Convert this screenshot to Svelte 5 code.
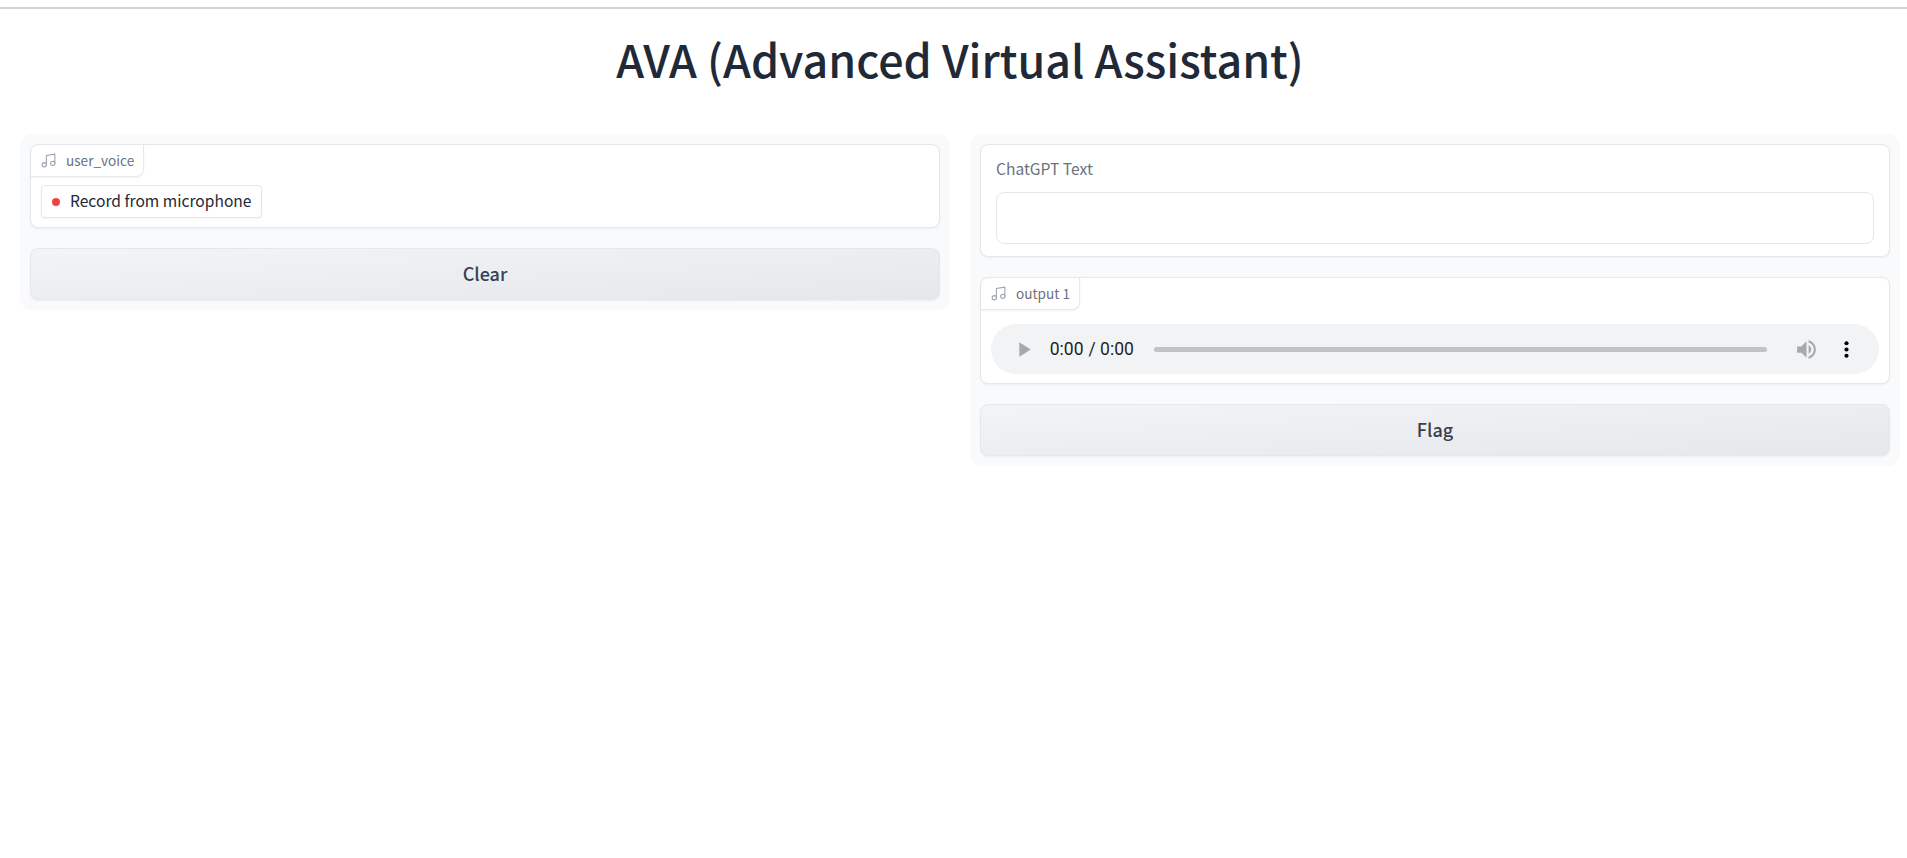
<script lang="ts">
  // AVA demo page: two-column Gradio style interface
  const noteIcon = 'M9 18V5l12-2v13';
</script>

{#snippet note()}
  <svg class="note" viewBox="0 0 24 24" fill="none" stroke="currentColor" stroke-width="1.5" stroke-linecap="round" stroke-linejoin="round">
    <path d={noteIcon} />
    <circle cx="6" cy="18" r="3" />
    <circle cx="18" cy="16" r="3" />
  </svg>
{/snippet}

<div class="page">
  <h1>AVA (Advanced Virtual Assistant)</h1>

  <main class="columns">
    <section class="panel">
      <div class="block audio-in">
        <div class="tab">{@render note()}<span>user_voice</span></div>
        <div class="record-row">
          <button class="record"><i class="dot"></i><span>Record from microphone</span></button>
        </div>
      </div>
      <button class="action">Clear</button>
    </section>

    <section class="panel">
      <div class="block text-out">
        <label for="reply">ChatGPT Text</label>
        <textarea id="reply" rows="1"></textarea>
      </div>
      <div class="block audio-out">
        <div class="tab">{@render note()}<span>output 1</span></div>
        <div class="player">
          <audio controls></audio>
        </div>
      </div>
      <button class="action">Flag</button>
    </section>
  </main>
</div>

<style>
  :global(body) {
    background: #fff;
  }

  .page {
    border-top: 2px solid #d4d4d6;
    margin-top: 7px;
    padding: 0 7px 0 20px;
    font-family: "Noto Sans CJK SC", "Source Sans Pro", sans-serif;
  }

  h1 {
    margin: 0;
    height: 125px;
    padding-top: 26px;
    box-sizing: border-box;
    font-size: 44.8px;
    line-height: 48px;
    font-weight: 500;
    color: #1f2937;
    text-align: center;
  }

  .columns {
    display: flex;
    align-items: flex-start;
    gap: 20px;
  }

  .panel {
    flex: 1 1 0;
    display: flex;
    flex-direction: column;
    gap: 20px;
    padding: 10px;
    background: #f9fafb;
    border-radius: 12px;
  }

  .block {
    position: relative;
    background: #fff;
    border: 1px solid #e5e7eb;
    border-radius: 8px;
    box-shadow: 0 1px 2px rgba(0, 0, 0, 0.05);
  }

  .tab {
    display: inline-flex;
    align-items: center;
    gap: 9px;
    height: 31px;
    padding: 0 9px 0 9px;
    border-right: 1px solid #e5e7eb;
    border-bottom: 1px solid #e5e7eb;
    border-radius: 8px 0 8px 0;
    box-shadow: 0 1px 2px rgba(0, 0, 0, 0.05);
    font-size: 13.6px;
    line-height: 20px;
    color: #6b7280;
  }

  .tab span {
    margin-top: -1px;
  }

  .note {
    width: 17px;
    height: 17px;
    color: #9ca3af;
  }

  .audio-in {
    height: 84px;
    box-sizing: border-box;
  }

  .record-row {
    padding: 8px 10px;
  }

  .record {
    display: inline-flex;
    align-items: center;
    height: 33px;
    padding: 0 9px 0 10px;
    background: #fff;
    border: 1px solid #e5e7eb;
    border-radius: 4px;
    box-shadow: 0 1px 2px rgba(0, 0, 0, 0.05);
    font-family: inherit;
    font-size: 15.6px;
    color: #1f2937;
  }

  .record span {
    margin-top: -4px;
  }

  .dot {
    width: 8px;
    height: 8px;
    margin-right: 10px;
    border-radius: 50%;
    background: #ef4444;
  }

  .action {
    height: 52px;
    padding-bottom: 3px;
    background: linear-gradient(to bottom right, #f3f4f6, #e5e7eb);
    border: 1px solid #e5e7eb;
    border-radius: 8px;
    box-shadow: 0 1px 2px rgba(0, 0, 0, 0.05);
    font-family: inherit;
    font-size: 18px;
    font-weight: 500;
    color: #374151;
  }

  .text-out {
    height: 113px;
    box-sizing: border-box;
    padding: 11px 15px;
  }

  label {
    display: block;
    margin-bottom: 12px;
    font-size: 15.6px;
    line-height: 24px;
    color: #6b7280;
  }

  textarea {
    display: block;
    width: 100%;
    height: 52px;
    box-sizing: border-box;
    padding: 10px 12px;
    background: #fff;
    border: 1px solid #e5e7eb;
    border-radius: 8px;
    resize: none;
    outline: none;
  }

  .audio-out {
    height: 107px;
    box-sizing: border-box;
  }

  .player {
    padding: 14px 10px 0;
  }

  audio {
    display: block;
    width: 100%;
    height: 40px;
    zoom: 1.25;
  }
</style>
